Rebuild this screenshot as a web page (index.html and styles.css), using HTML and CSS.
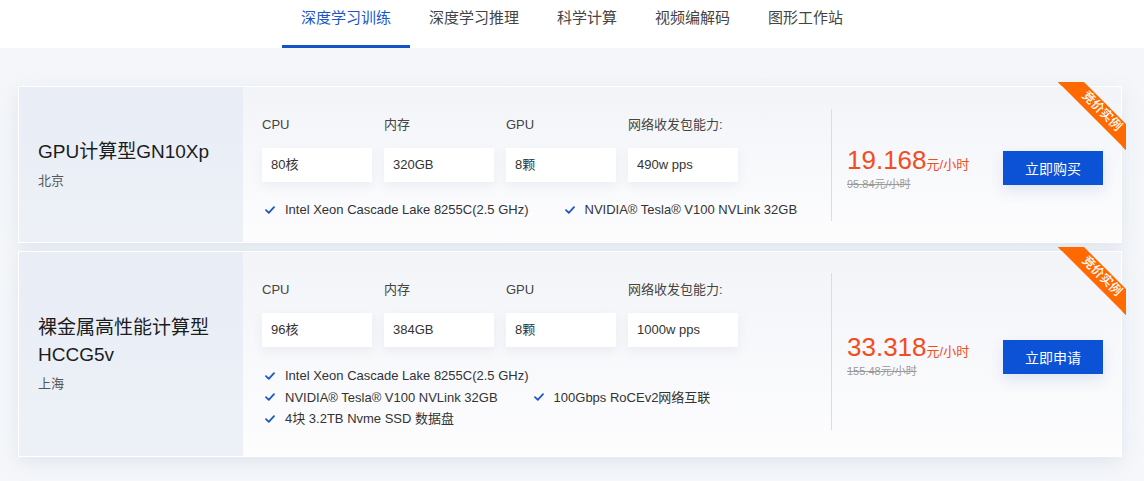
FILE: index.html
```html
<!DOCTYPE html>
<html lang="zh-CN">
<head>
<meta charset="utf-8">
<title>GPU 实例</title>
<link rel="stylesheet" href="styles.css">
</head>
<body>
<header class="tabs-bar">
  <nav class="tabs">
    <a class="tab tab--active">深度学习训练</a>
    <a class="tab">深度学习推理</a>
    <a class="tab">科学计算</a>
    <a class="tab">视频编解码</a>
    <a class="tab">图形工作站</a>
  </nav>
</header>

<main class="list">
  <section class="card">
    <div class="card-side">
      <h3 class="card-title">GPU计算型GN10Xp</h3>
      <p class="card-region">北京</p>
    </div>
    <div class="card-specs">
      <div class="spec-grid">
        <div class="spec"><div class="spec-label">CPU</div><div class="spec-value">80核</div></div>
        <div class="spec"><div class="spec-label">内存</div><div class="spec-value">320GB</div></div>
        <div class="spec"><div class="spec-label">GPU</div><div class="spec-value">8颗</div></div>
        <div class="spec"><div class="spec-label">网络收发包能力:</div><div class="spec-value">490w pps</div></div>
      </div>
      <div class="features">
        <div class="feature-row">
          <span class="feature"><svg class="check" viewBox="0 0 10 8"><path d="M1 4.2 3.8 6.8 9 1.2"/></svg>Intel Xeon Cascade Lake 8255C(2.5 GHz)</span>
          <span class="feature"><svg class="check" viewBox="0 0 10 8"><path d="M1 4.2 3.8 6.8 9 1.2"/></svg>NVIDIA® Tesla® V100 NVLink 32GB</span>
        </div>
      </div>
    </div>
    <div class="divider"></div>
    <div class="card-buy">
      <div class="price">
        <div class="price-now"><span class="price-num">19.168</span><span class="price-unit">元/小时</span></div>
        <div class="price-old">95.84元/小时</div>
      </div>
      <button class="btn">立即购买</button>
    </div>
    <div class="ribbon">
      <svg viewBox="0 0 68 68" width="68" height="68">
        <polygon points="0,0 4,0 4,4" fill="#c44e00"/>
        <polygon points="64,64 68,64 68,68" fill="#c44e00"/>
        <polygon points="0,0 26,0 68,42 68,68" fill="#ff6a00"/>
        <text x="44" y="33" text-anchor="middle" transform="rotate(45 44 29)" class="ribbon-text">竞价实例</text>
      </svg>
    </div>
  </section>

  <section class="card card--tall">
    <div class="card-side">
      <h3 class="card-title">裸金属高性能计算型<br>HCCG5v</h3>
      <p class="card-region">上海</p>
    </div>
    <div class="card-specs">
      <div class="spec-grid">
        <div class="spec"><div class="spec-label">CPU</div><div class="spec-value">96核</div></div>
        <div class="spec"><div class="spec-label">内存</div><div class="spec-value">384GB</div></div>
        <div class="spec"><div class="spec-label">GPU</div><div class="spec-value">8颗</div></div>
        <div class="spec"><div class="spec-label">网络收发包能力:</div><div class="spec-value">1000w pps</div></div>
      </div>
      <div class="features features--dense">
        <div class="feature-row">
          <span class="feature"><svg class="check" viewBox="0 0 10 8"><path d="M1 4.2 3.8 6.8 9 1.2"/></svg>Intel Xeon Cascade Lake 8255C(2.5 GHz)</span>
        </div>
        <div class="feature-row">
          <span class="feature"><svg class="check" viewBox="0 0 10 8"><path d="M1 4.2 3.8 6.8 9 1.2"/></svg>NVIDIA® Tesla® V100 NVLink 32GB</span>
          <span class="feature"><svg class="check" viewBox="0 0 10 8"><path d="M1 4.2 3.8 6.8 9 1.2"/></svg>100Gbps RoCEv2网络互联</span>
        </div>
        <div class="feature-row">
          <span class="feature"><svg class="check" viewBox="0 0 10 8"><path d="M1 4.2 3.8 6.8 9 1.2"/></svg>4块 3.2TB Nvme SSD 数据盘</span>
        </div>
      </div>
    </div>
    <div class="divider"></div>
    <div class="card-buy">
      <div class="price">
        <div class="price-now"><span class="price-num">33.318</span><span class="price-unit">元/小时</span></div>
        <div class="price-old">155.48元/小时</div>
      </div>
      <button class="btn">立即申请</button>
    </div>
    <div class="ribbon">
      <svg viewBox="0 0 68 68" width="68" height="68">
        <polygon points="0,0 4,0 4,4" fill="#c44e00"/>
        <polygon points="64,64 68,64 68,68" fill="#c44e00"/>
        <polygon points="0,0 26,0 68,42 68,68" fill="#ff6a00"/>
        <text x="44" y="33" text-anchor="middle" transform="rotate(45 44 29)" class="ribbon-text">竞价实例</text>
      </svg>
    </div>
  </section>
</main>
</body>
</html>
```

FILE: styles.css
```css
* { box-sizing: border-box; }

html, body {
  margin: 0;
  padding: 0;
}

body {
  width: 1144px;
  height: 481px;
  overflow: hidden;
  font-family: "Liberation Sans", Arial, "Noto Sans CJK SC", sans-serif;
  color: #333;
  background: linear-gradient(180deg, #e4e8ef 0, #eef1f5 14px, #f4f6f9 40px, #f5f7fa 100%);
}

.tabs-bar {
  height: 48px;
  background: #fff;
}

.tabs {
  display: flex;
  justify-content: center;
  height: 48px;
}

.tab {
  display: block;
  padding: 8px 19px 0;
  font-size: 15px;
  line-height: 20px;
  color: #444;
  border-bottom: 3px solid transparent;
  cursor: pointer;
}

.tab--active {
  color: #1b56c6;
  border-bottom-color: #1553c4;
}

.list {
  padding: 38px 0 0 18px;
  display: flex;
  flex-direction: column;
  gap: 8px;
}

.card {
  position: relative;
  width: 1104px;
  display: flex;
  border: 1px solid #fff;
  background: linear-gradient(180deg, #f2f4f8 0%, #fdfdfe 100%);
  box-shadow: 0 6px 18px rgba(160, 175, 200, 0.22);
}

.card-side {
  width: 224px;
  flex: none;
  padding: 0 19px;
  display: flex;
  flex-direction: column;
  justify-content: center;
  background: linear-gradient(180deg, #e8edf6 0%, #edf1f7 100%);
}

.card-title {
  margin: 0;
  font-size: 19px;
  font-weight: normal;
  line-height: 27px;
  color: #1c1c1c;
}

.card-region {
  margin: 6px 0 0;
  font-size: 13px;
  line-height: 20px;
  color: #555;
}

.card-specs {
  flex: 1;
  padding: 30px 0 22px 19px;
}

.card--tall .card-specs {
  padding-bottom: 26px;
}

.spec-grid {
  display: flex;
  gap: 12px;
}

.spec {
  width: 110px;
}

.spec-label {
  font-size: 13px;
  line-height: 16px;
  color: #444;
  white-space: nowrap;
}

.spec-value {
  margin-top: 15px;
  height: 34px;
  padding: 0 9px;
  font-size: 13px;
  line-height: 34px;
  color: #333;
  background: #fff;
  box-shadow: 0 4px 10px rgba(170, 182, 205, 0.18);
}

.features {
  margin-top: 18px;
}

.feature-row {
  display: flex;
  gap: 33px;
  font-size: 13px;
  line-height: 20px;
  color: #333;
}

.features--dense .feature-row {
  line-height: 21.5px;
}

.feature {
  display: inline-flex;
  align-items: center;
  white-space: nowrap;
}

.check {
  width: 10px;
  height: 8px;
  margin: 0 10px 0 3px;
  fill: none;
  stroke: #1f57c3;
  stroke-width: 1.8;
  stroke-linecap: round;
  stroke-linejoin: round;
}

.divider {
  width: 1px;
  flex: none;
  margin: 22px 0 21px;
  background: #d9dde3;
}

.card--tall .divider {
  margin: 21px 0 26px;
}

.card-buy {
  width: 289px;
  flex: none;
  display: flex;
  align-items: center;
  justify-content: space-between;
  padding: 0 18px 0 15px;
}

.price {
  padding-top: 6px;
}

.card--tall .price {
  padding-top: 2px;
}

.price-now {
  color: #f24d21;
  white-space: nowrap;
}

.price-num {
  font-size: 26px;
  line-height: 30px;
}

.price-unit {
  font-size: 13px;
}

.price-old {
  margin-top: 2px;
  font-size: 11px;
  line-height: 14px;
  color: #9a9a9a;
  text-decoration: line-through;
}

.btn {
  width: 100px;
  height: 34px;
  margin-top: 6px;
  border: 0;
  padding: 0;
  font-family: inherit;
  font-size: 14px;
  color: #fff;
  background: #0b52d6;
  box-shadow: 0 6px 14px rgba(40, 80, 170, 0.12);
  cursor: pointer;
}

.ribbon {
  position: absolute;
  top: -5px;
  right: -5px;
  width: 68px;
  height: 68px;
}

.ribbon svg {
  display: block;
}

.ribbon-text {
  font-family: "Noto Sans CJK SC", sans-serif;
  font-size: 12.5px;
  font-weight: 500;
  fill: #fff;
}
```
